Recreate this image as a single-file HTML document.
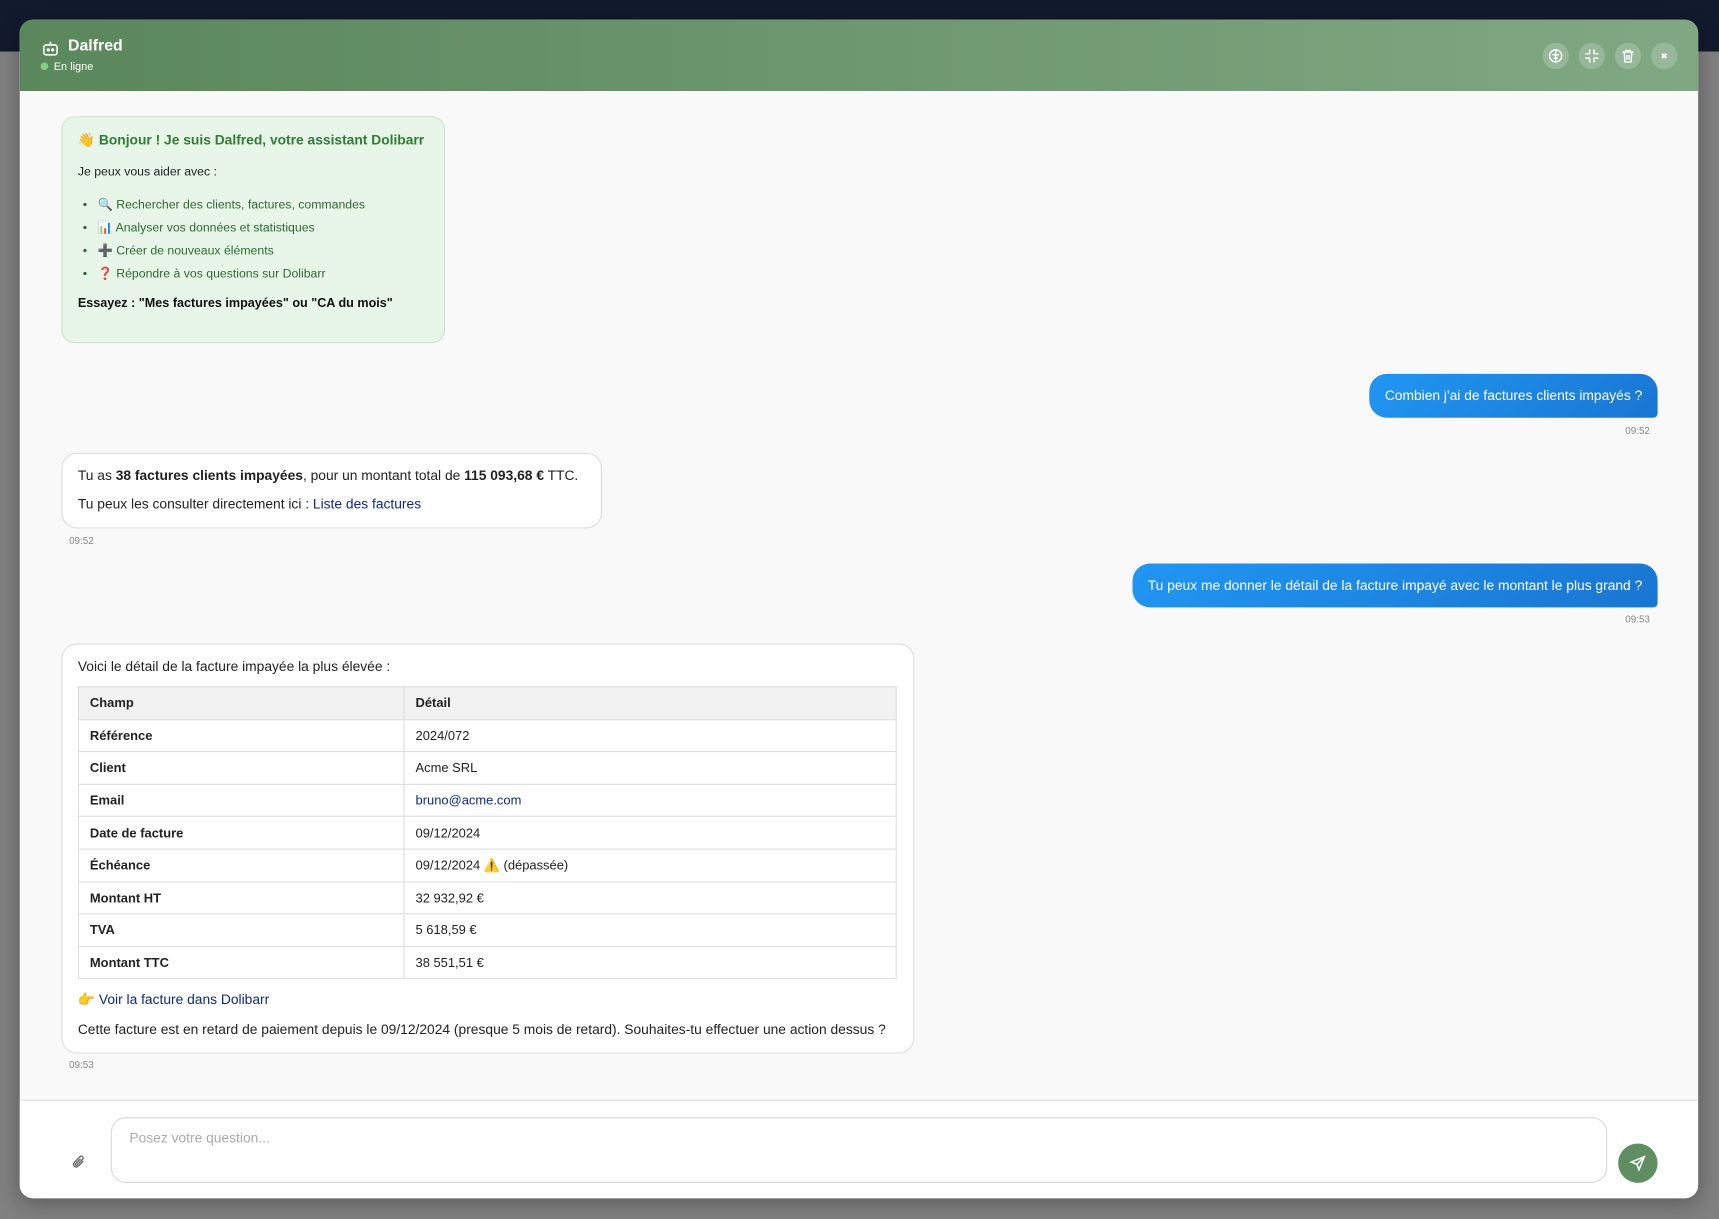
<!DOCTYPE html>
<html><head><meta charset="utf-8">
<style>
html,body{margin:0;padding:0;}
body{width:1719px;height:1219px;overflow:hidden;background:#808080;font-family:"Liberation Sans",Arial,sans-serif;}
#s{position:absolute;left:0;top:0;width:1568px;height:1112px;transform:scale(1.0963);transform-origin:0 0;background:#808080;}
.nav{position:absolute;left:0;top:0;width:1568px;height:47px;background:#121a2e;}
.modal{position:absolute;left:18px;top:18px;width:1531px;height:1075px;border-radius:12px;overflow:hidden;background:#f9f9f9;box-shadow:0 4px 20px rgba(0,0,0,.3);}
.hdr{position:absolute;left:0;top:0;width:100%;height:65px;background:linear-gradient(90deg,#5b875c,#80a883);color:#fff;}
.hdr .t{position:absolute;left:44px;top:16px;font-size:14.5px;font-weight:bold;}
.hdr .st{position:absolute;left:19px;top:38px;font-size:10px;}
.hdr .st i{display:inline-block;width:7px;height:7px;border-radius:50%;background:#7ed17f;margin-right:5px;vertical-align:0px;}
.btn{position:absolute;top:21px;width:24px;height:24px;border-radius:50%;background:rgba(255,255,255,.2);}
.btn svg{position:absolute;left:5px;top:5px;}
.txt{position:absolute;font-size:12.6px;color:#222;white-space:nowrap;}
.welcome{position:absolute;left:38px;top:88px;width:350px;height:207px;background:#e8f5e9;border:1px solid #c8e6c9;border-radius:12px;box-sizing:border-box;}
.welcome .h{position:absolute;left:14px;top:14px;font-size:12.6px;font-weight:bold;color:#2e7d32;white-space:nowrap;}
.welcome ul{position:absolute;left:0;top:70px;margin:0;padding-left:32px;font-size:11.2px;color:#2e6b2f;line-height:21px;white-space:nowrap;}
.user{position:absolute;right:37px;height:40px;border-radius:16px 16px 4px 16px;background:linear-gradient(135deg,#2196f3,#1976d2);color:#fff;font-size:12.6px;line-height:40px;padding:0 14px;white-space:nowrap;}
.time{position:absolute;font-size:9px;color:#888;}
.bot{position:absolute;left:38px;background:#fff;border:1px solid #ddd;border-radius:14px;box-sizing:border-box;}
a{color:#0d2b7a;text-decoration:none;}
table{position:absolute;left:14px;top:38px;width:747px;border-collapse:collapse;font-size:11.8px;color:#222;}
td{border:1px solid #ddd;height:28.6px;padding:0 10px;}
td:first-child{font-weight:bold;width:276px;}
tr:first-child td{background:#f2f2f2;font-weight:bold;}
.foot{position:absolute;left:0;top:985px;width:100%;height:90px;background:#fff;border-top:1px solid #ddd;}
.ta{position:absolute;left:83px;top:15px;width:1365px;height:60px;border:1px solid #d8d8d8;border-radius:14px;box-sizing:border-box;background:#fff;}
.ta span{position:absolute;left:16px;top:11px;font-size:12.6px;color:#aaa;}
.send{position:absolute;left:1458px;top:39px;width:36px;height:36px;border-radius:50%;background:#5f8e62;}
</style></head><body>
<div id="s">
<div class="nav"></div>
<div class="modal">
 <div class="hdr">
  <svg style="position:absolute;left:20px;top:18px" width="16" height="16" viewBox="0 0 16 16" fill="none" stroke="#fff" stroke-width="1.4"><rect x="2" y="5" width="12" height="9" rx="2"/><line x1="8" y1="2" x2="8" y2="5"/><circle cx="6" cy="9.5" r=".8" fill="#fff"/><circle cx="10" cy="9.5" r=".8" fill="#fff"/></svg>
  <div class="t">Dalfred</div>
  <div class="st"><i></i>En ligne</div>
  <div class="btn" style="left:1389px"><svg width="14" height="14" viewBox="0 0 14 14" fill="none" stroke="#fff" stroke-width="1.3"><circle cx="7" cy="7" r="5.5"/><line x1="7" y1="2" x2="7" y2="12"/><path d="M4 6h6M5 9h4"/></svg></div>
  <div class="btn" style="left:1422px"><svg width="14" height="14" viewBox="0 0 14 14" fill="none" stroke="#fff" stroke-width="1.3"><path d="M5 1v4H1M9 1v4h4M5 13V9H1M9 13V9h4"/></svg></div>
  <div class="btn" style="left:1455px"><svg width="14" height="14" viewBox="0 0 14 14" fill="none" stroke="#fff" stroke-width="1.3"><path d="M2 3.5h10M5 3.5V2h4v1.5M3.5 3.5l.7 9h5.6l.7-9M6 6v4.5M8 6v4.5"/></svg></div>
  <div class="btn" style="left:1488px"><svg width="14" height="14" viewBox="0 0 14 14" fill="none" stroke="#fff" stroke-width="1.8"><path d="M5 5l4 4M9 5l-4 4"/></svg></div>
 </div>
 <div class="welcome">
  <div class="h">👋 Bonjour ! Je suis Dalfred, votre assistant Dolibarr</div>
  <div class="txt" style="left:14px;top:44px;font-size:11.2px">Je peux vous aider avec :</div>
  <ul><li>🔍 Rechercher des clients, factures, commandes</li><li>📊 Analyser vos données et statistiques</li><li>➕ Créer de nouveaux éléments</li><li>❓ Répondre à vos questions sur Dolibarr</li></ul>
  <div class="txt" style="left:14px;top:164px;font-size:11.5px;font-weight:bold;color:#111">Essayez : "Mes factures impayées" ou "CA du mois"</div>
 </div>
 <div class="user" style="top:323px">Combien j'ai de factures clients impayés ?</div>
 <div class="time" style="right:44px;top:370px">09:52</div>
 <div class="bot" style="top:395px;width:493px;height:69px">
  <div class="txt" style="left:14px;top:13px">Tu as <b>38 factures clients impayées</b>, pour un montant total de <b>115 093,68 €</b> TTC.</div>
  <div class="txt" style="left:14px;top:39px">Tu peux les consulter directement ici : <a>Liste des factures</a></div>
 </div>
 <div class="time" style="left:45px;top:470px">09:52</div>
 <div class="user" style="top:496px">Tu peux me donner le détail de la facture impayé avec le montant le plus grand ?</div>
 <div class="time" style="right:44px;top:542px">09:53</div>
 <div class="bot" style="top:569px;width:778px;height:374px">
  <div class="txt" style="left:14px;top:13px">Voici le détail de la facture impayée la plus élevée :</div>
  <table>
   <tr><td>Champ</td><td>Détail</td></tr>
   <tr><td>Référence</td><td>2024/072</td></tr>
   <tr><td>Client</td><td>Acme SRL</td></tr>
   <tr><td>Email</td><td><a>bruno@acme.com</a></td></tr>
   <tr><td>Date de facture</td><td>09/12/2024</td></tr>
   <tr><td>Échéance</td><td>09/12/2024 ⚠️ (dépassée)</td></tr>
   <tr><td>Montant HT</td><td>32 932,92 €</td></tr>
   <tr><td>TVA</td><td>5 618,59 €</td></tr>
   <tr><td>Montant TTC</td><td>38 551,51 €</td></tr>
  </table>
  <div class="txt" style="left:14px;top:317px">👉 <a>Voir la facture dans Dolibarr</a></div>
  <div class="txt" style="left:14px;top:344px">Cette facture est en retard de paiement depuis le 09/12/2024 (presque 5 mois de retard). Souhaites-tu effectuer une action dessus ?</div>
 </div>
 <div class="time" style="left:45px;top:948px">09:53</div>
 <div class="foot">
  <svg style="position:absolute;left:47px;top:48px" width="14" height="16" viewBox="0 0 14 16" fill="none" stroke="#666" stroke-width="1.2"><path d="M11 7l-5 5a2.5 2.5 0 0 1-3.5-3.5l5.5-5.5a1.7 1.7 0 0 1 2.4 2.4l-5.3 5.3a.8.8 0 0 1-1.2-1.2l4.6-4.6"/></svg>
  <div class="ta"><span>Posez votre question...</span></div>
  <div class="send"><svg style="position:absolute;left:10px;top:10px" width="16" height="16" viewBox="0 0 16 16" fill="none" stroke="#fff" stroke-width="1.4"><path d="M14 2L2 7l5 2 2 5z M14 2L7 9"/></svg></div>
 </div>
</div>
</div>
</body></html>
